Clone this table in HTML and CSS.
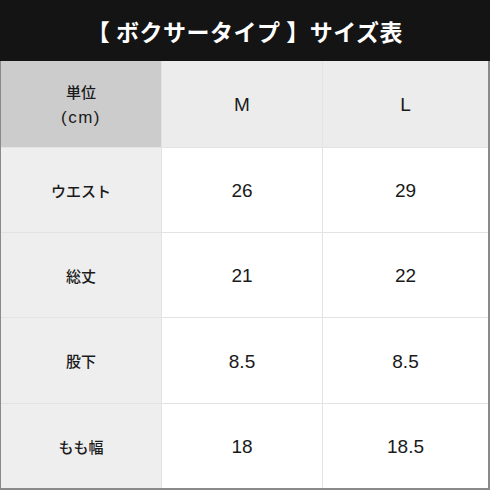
FILE: index.html
```html
<!DOCTYPE html>
<html lang="ja">
<head>
<meta charset="utf-8">
<link rel="stylesheet" href="styles.css">
</head>
<body>
<div class="page">
  <div class="title">【 ボクサータイプ 】サイズ表</div>
  <div class="table">
    <div class="cell unit"><div class="unit-text">単位<br><span class="cm">(cm)</span></div></div>
    <div class="cell head num">M</div>
    <div class="cell head num">L</div>

    <div class="cell label">ウエスト</div>
    <div class="cell num">26</div>
    <div class="cell num">29</div>

    <div class="cell label">総丈</div>
    <div class="cell num">21</div>
    <div class="cell num">22</div>

    <div class="cell label">股下</div>
    <div class="cell num">8.5</div>
    <div class="cell num">8.5</div>

    <div class="cell label">もも幅</div>
    <div class="cell num">18</div>
    <div class="cell num">18.5</div>
  </div>
</div>
</body>
</html>
```

FILE: styles.css
```css
html, body {
  margin: 0;
  padding: 0;
  background: #ffffff;
}
.page {
  width: 490px;
  height: 490px;
  display: flex;
  flex-direction: column;
  font-family: "Noto Sans CJK JP", "Noto Sans", sans-serif;
}
.title {
  height: 61px;
  background: #141414;
  color: #ffffff;
  font-size: 23px;
  font-weight: 700;
  display: flex;
  align-items: center;
  justify-content: center;
  letter-spacing: 0.5px;
}
.table {
  flex: 1;
  display: grid;
  grid-template-columns: 160px 160px 1fr;
  grid-template-rows: 86px 84px 84px 85px 1fr;
  gap: 1px;
  background: #e3e3e3;
  border-left: 1px solid #8a8a8a;
  border-right: 2px solid #8a8a8a;
  border-bottom: 2px solid #8a8a8a;
}
.cell {
  background: #ffffff;
  display: flex;
  align-items: center;
  justify-content: center;
  text-align: center;
  color: #1a1a1a;
}
.unit {
  background: #cccccc;
}
.unit-text {
  font-size: 15px;
  font-weight: 500;
  line-height: 25px;
}
.cm {
  font-family: "Liberation Sans", Arial, sans-serif;
  font-size: 17px;
  letter-spacing: 1.5px;
}
.head {
  background: #ececec;
}
.label {
  background: #eeeeee;
  font-size: 15px;
  font-weight: 500;
}
.num {
  font-family: "Liberation Sans", Arial, sans-serif;
  font-size: 19px;
  padding-top: 2px;
}
```
